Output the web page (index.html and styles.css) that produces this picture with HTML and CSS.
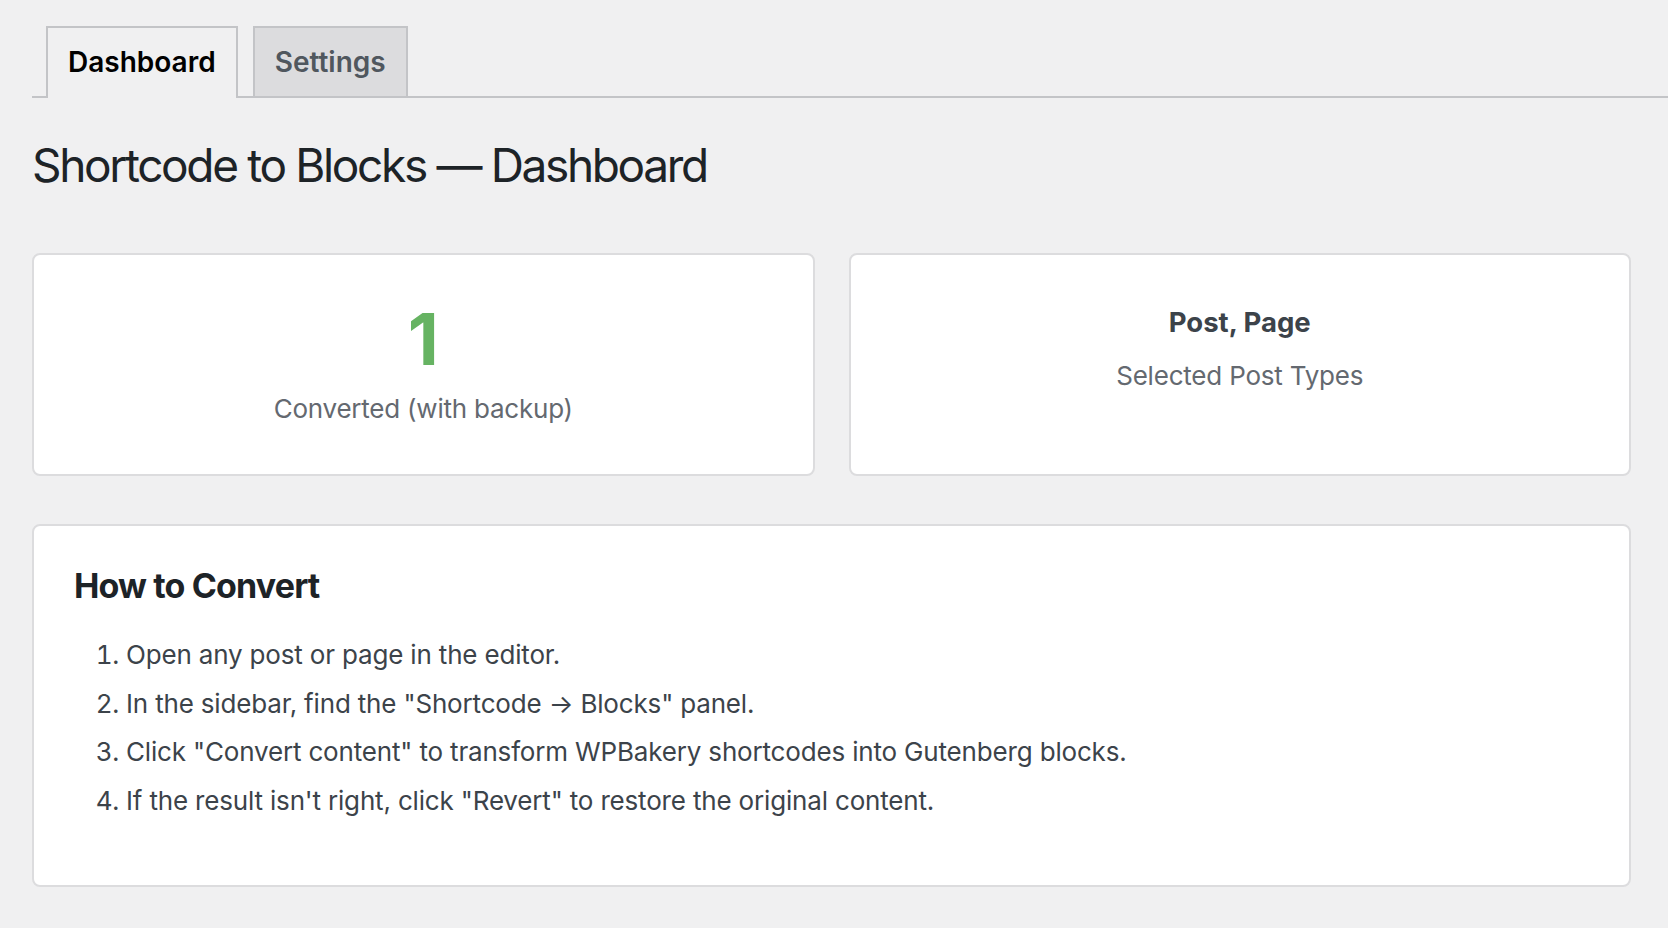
FILE: index.html
```html
<!DOCTYPE html>
<html lang="en">
<head>
<meta charset="utf-8">
<title>Shortcode to Blocks — Dashboard</title>
<link rel="stylesheet" href="styles.css">
</head>
<body>
<div class="wrap">
  <nav class="tabs">
    <a class="tab tab-active" href="#">Dashboard</a>
    <a class="tab" href="#">Settings</a>
  </nav>
  <h1 class="page-title">Shortcode to Blocks — Dashboard</h1>
  <div class="stats">
    <div class="card stat">
      <div class="stat-number">1</div>
      <div class="stat-label">Converted (with backup)</div>
    </div>
    <div class="card stat">
      <div class="stat-title">Post, Page</div>
      <div class="stat-sub">Selected Post Types</div>
    </div>
  </div>
  <div class="card howto">
    <h2 class="howto-title">How to Convert</h2>
    <ol class="steps">
      <li>Open any post or page in the editor.</li>
      <li>In the sidebar, find the "Shortcode → Blocks" panel.</li>
      <li>Click "Convert content" to transform WPBakery shortcodes into Gutenberg blocks.</li>
      <li>If the result isn't right, click "Revert" to restore the original content.</li>
    </ol>
  </div>
</div>
</body>
</html>
```
FILE: styles.css
```css
html, body {
  margin: 0;
  padding: 0;
  background: #f0f0f1;
}
body {
  font-family: Inter, "Noto Sans", "Liberation Sans", sans-serif;
  color: #3c434a;
}
.wrap {
  padding: 26px 37px 40px 32px;
}
.tabs {
  display: flex;
  border-bottom: 2px solid #c3c4c7;
  padding-left: 14px;
  gap: 15px;
  margin-right: -37px;
}
.tab {
  display: block;
  font-size: 28px;
  font-weight: 600;
  line-height: 48px;
  padding: 10px 20px;
  border: 2px solid #c3c4c7;
  border-bottom: none;
  background: #dcdcde;
  color: #50575e;
  text-decoration: none;
}
.tab-active {
  background: #f0f0f1;
  color: #000;
  margin-bottom: -2px;
  padding-bottom: 12px;
}
.page-title {
  margin: 37px 0 0 0;
  font-size: 46px;
  line-height: 60px;
  font-weight: 400;
  color: #1d2327;
  letter-spacing: -2.35px;
}
.card {
  background: #fff;
  border: 2px solid #dcdcde;
  border-radius: 8px;
  box-sizing: border-box;
}
.stats {
  display: grid;
  grid-template-columns: 1fr 1fr;
  gap: 34px;
  margin-top: 58px;
}
.stat {
  padding: 48px 20px 46px;
  text-align: center;
}
.stat-number {
  font-size: 72px;
  line-height: 72px;
  font-weight: 700;
  color: #66b362;
}
.stat-label {
  margin-top: 14px;
  font-size: 26px;
  line-height: 39px;
  color: #646970;
  letter-spacing: -0.22px;
}
.stat-title {
  font-size: 27.5px;
  line-height: 39px;
  font-weight: 700;
  color: #3c434a;
}
.stat-sub {
  margin-top: 14px;
  font-size: 26px;
  line-height: 39px;
  color: #646970;
  letter-spacing: -0.2px;
}
.howto {
  margin-top: 48px;
  padding: 38px 40px 54px;
}
.howto-title {
  margin: 0;
  font-size: 34px;
  line-height: 44px;
  font-weight: 700;
  color: #1d2327;
  letter-spacing: -0.85px;
}
.steps {
  margin: 29px 0 0 0;
  padding-left: 52px;
  font-size: 26px;
  line-height: 36.4px;
  color: #3c434a;
  letter-spacing: -0.17px;
}
.steps li {
  margin-bottom: 12.2px;
}
```
